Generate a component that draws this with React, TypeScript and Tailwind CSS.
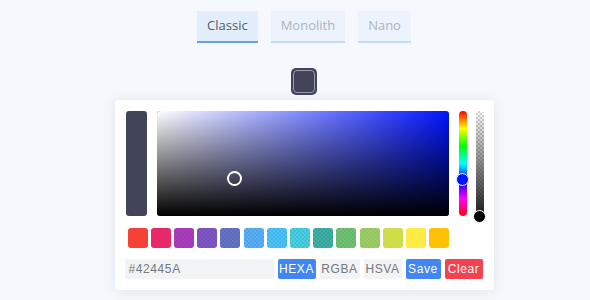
const tabs = [
  { label: 'Classic', active: true },
  { label: 'Monolith', active: false },
  { label: 'Nano', active: false },
];

const swatches = [
  'bg-[rgba(244,67,54,1)]',
  'bg-[rgba(233,30,99,0.95)]',
  'bg-[rgba(156,39,176,0.9)]',
  'bg-[rgba(103,58,183,0.85)]',
  'bg-[rgba(63,81,181,0.8)]',
  'bg-[rgba(33,150,243,0.75)]',
  'bg-[rgba(3,169,244,0.7)]',
  'bg-[rgba(0,188,212,0.7)]',
  'bg-[rgba(0,150,136,0.75)]',
  'bg-[rgba(76,175,80,0.8)]',
  'bg-[rgba(139,195,74,0.85)]',
  'bg-[rgba(205,220,57,0.9)]',
  'bg-[rgba(255,235,59,0.95)]',
  'bg-[rgba(255,193,7,1)]',
];

const checker =
  'bg-[conic-gradient(#cfcfcf_25%,#fff_0_50%,#cfcfcf_0_75%,#fff_0)] bg-[length:4px_4px]';

export default function App() {
  return (
    <div className="min-h-[300px] w-full bg-[#f5f9fd] pl-[18px] flex flex-col items-center font-['Liberation_Sans',Arial,sans-serif]">
      {/* tabs */}
      <div className="mt-[11px] flex gap-[13px]">
        {tabs.map((t) => (
          <div
            key={t.label}
            className={
              t.active
                ? "h-[32px] px-[10px] flex items-center bg-[#e3eefc] border-b-2 border-[#6a9fe6] text-[#555a62] text-[13px] font-['Open_Sans',sans-serif]"
                : "h-[32px] px-[10px] flex items-center bg-[#ecf3fd] border-b-2 border-[#c6dbf6] text-[#aeb3bb] text-[13px] font-['Open_Sans',sans-serif]"
            }
          >
            {t.label}
          </div>
        ))}
      </div>

      {/* picker button */}
      <div className="mt-[25px] w-[26px] h-[27px] rounded-[5px] bg-[#42445A] p-[2px]">
        <div className="w-full h-full rounded-[4px] border border-[#9a9cb0] bg-[#42445A]" />
      </div>

      {/* picker app */}
      <div className="mt-[5px] w-[379px] bg-white rounded-[3px] shadow-[0_1px_14px_rgba(0,0,0,0.09)] p-[11px] pr-[10px]">
        <div className="h-[105px] flex">
          <div className="w-[21px] rounded-[3px] bg-[#42445A]" />
          <div className="relative ml-[10px] w-[292px] rounded-[3px] bg-[#0015ff] overflow-hidden">
            <div className="absolute inset-0 bg-linear-to-r from-white to-transparent" />
            <div className="absolute inset-0 bg-linear-to-b from-transparent to-black" />
            <div className="absolute left-[70px] top-[60px] w-[15px] h-[15px] rounded-full border-2 border-white" />
          </div>
          <div className="relative ml-[10px] w-[8px] rounded-full bg-[linear-gradient(to_bottom,#f00,#ff0,#0f0,#0ff,#00f,#f0f,#f00)]">
            <div className="absolute left-[-2.5px] top-[62px] w-[13px] h-[13px] rounded-full bg-[#0015ff] border-[1.5px] border-white shadow-[0_0_1px_rgba(0,0,0,0.4)]" />
          </div>
          <div className={`relative ml-[9px] w-[8px] rounded-full ${checker}`}>
            <div className="absolute inset-0 rounded-full bg-linear-to-b from-transparent to-[#1c1c1f]" />
            <div className="absolute left-[-2.5px] top-[99px] w-[13px] h-[13px] rounded-full bg-black border-[1.5px] border-white" />
          </div>
        </div>

        {/* swatches */}
        <div className="mt-[12px] ml-[2px] w-[322px] flex justify-between">
          {swatches.map((c) => (
            <div key={c} className={`w-[20px] h-[20px] rounded-[3px] overflow-hidden ${checker}`}>
              <div className={`w-full h-full ${c}`} />
            </div>
          ))}
        </div>

        {/* interaction */}
        <div className="mt-[11px] flex gap-[4px] text-[12px] tracking-[0.05em] -ml-px">
          <div className="w-[149px] h-[20px] rounded-[2px] bg-[#f1f3f4] text-[#75797e] px-[4px] flex items-center">
            #42445A
          </div>
          <div className="w-[38px] h-[20px] rounded-[2px] bg-[#4285f4] text-white flex items-center justify-center">
            HEXA
          </div>
          <div className="w-[40px] h-[20px] rounded-[2px] bg-[#f1f3f4] text-[#75797e] flex items-center justify-center">
            RGBA
          </div>
          <div className="w-[38px] h-[20px] rounded-[2px] bg-[#f1f3f4] text-[#75797e] flex items-center justify-center">
            HSVA
          </div>
          <div className="w-[35px] h-[20px] rounded-[2px] bg-[#4285f4] text-white flex items-center justify-center">
            Save
          </div>
          <div className="w-[38px] h-[20px] rounded-[2px] bg-[#f44250] text-white flex items-center justify-center">
            Clear
          </div>
        </div>
      </div>
    </div>
  );
}
